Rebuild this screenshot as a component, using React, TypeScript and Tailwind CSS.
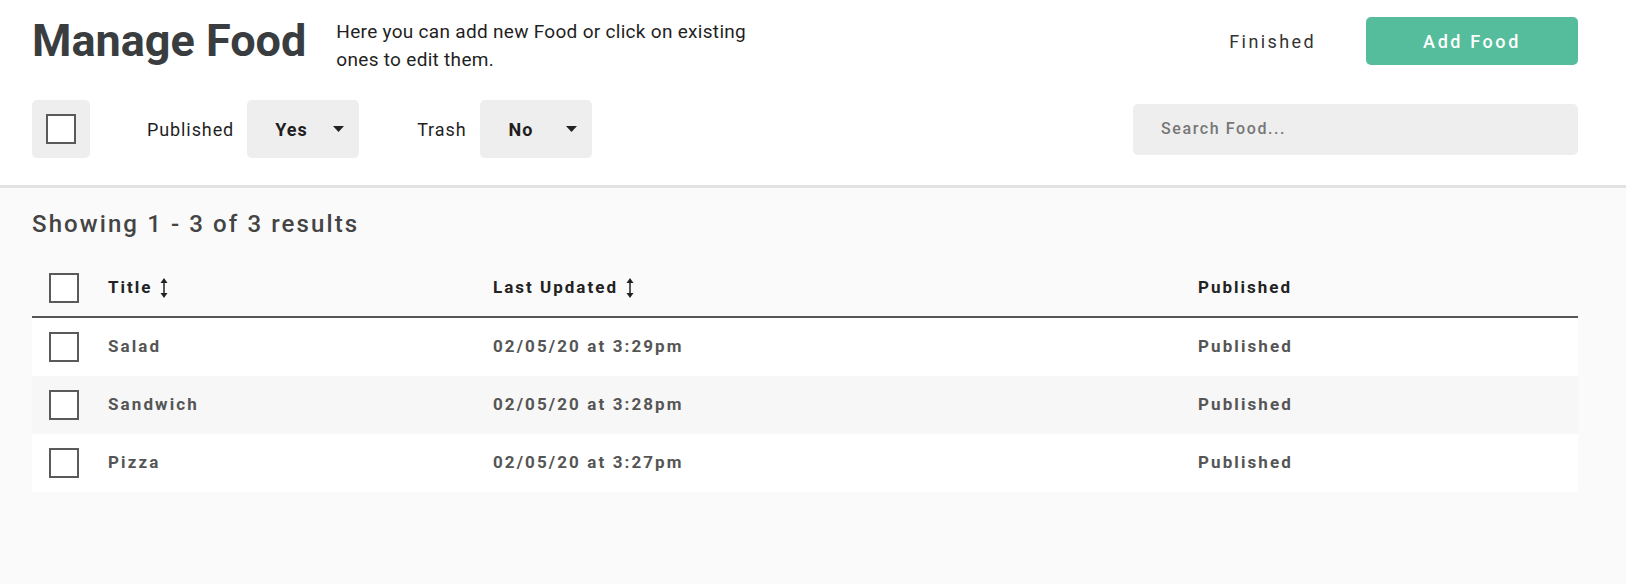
import React from 'react';

type FoodRow = {
  title: string;
  updated: string;
  status: string;
};

const rows: FoodRow[] = [
  { title: 'Salad', updated: '02/05/20 at 3:29pm', status: 'Published' },
  { title: 'Sandwich', updated: '02/05/20 at 3:28pm', status: 'Published' },
  { title: 'Pizza', updated: '02/05/20 at 3:27pm', status: 'Published' },
];

const Caret = () => (
  <svg width="11" height="6" viewBox="0 0 11 6" className="fill-[#222]">
    <path d="M0 0 H11 L5.5 6 Z" />
  </svg>
);

const SortIcon = () => (
  <svg width="10" height="22" viewBox="0 0 10 22" className="ml-[7px] text-[#222]">
    <path d="M5 1 L1.5 6 H8.5 Z" fill="currentColor" />
    <path d="M5 21 L1.5 16 H8.5 Z" fill="currentColor" />
    <line x1="5" y1="5" x2="5" y2="17" stroke="currentColor" strokeWidth="1.5" />
  </svg>
);

const Checkbox = () => <div className="h-[30px] w-[30px] border-2 border-[#5a5a5a] bg-white" />;

const Select = ({ value }: { value: string }) => (
  <div className="flex h-[58px] w-[112px] items-center justify-between rounded-[5px] bg-[#eeeeee] pl-7 pr-[15px]">
    <span className="text-[18px] font-bold tracking-[1px] text-[#1e1e1e]">{value}</span>
    <Caret />
  </div>
);

export default function App() {
  return (
    <div className="min-h-screen bg-[#fafafa] font-['Roboto',sans-serif]">
      <div className="border-b-[3px] border-[#e2e2e2] bg-white pb-[27px] pl-8 pr-[48px] pt-[15px]">
        <div className="flex items-start justify-between">
          <div className="flex items-start">
            <h1 className="text-[45px] font-bold leading-[52px] tracking-[0px] text-[#3a3d3f]">Manage Food</h1>
            <p className="ml-[30px] mt-[3px] text-[19px] leading-[28px] tracking-[0.3px] text-[#1f1f1f]">
              Here you can add new Food or click on existing
              <br />
              ones to edit them.
            </p>
          </div>
          <div className="mt-[2px] flex items-center">
            <button className="text-[18px] tracking-[2.4px] text-[#333]">Finished</button>
            <button className="ml-[50px] h-[48px] w-[212px] rounded-[5px] bg-[#55bd9b] text-[18px] font-medium tracking-[2.6px] text-white">
              Add Food
            </button>
          </div>
        </div>

        <div className="mt-[26px] flex items-center justify-between">
          <div className="flex items-center">
            <div className="flex h-[58px] w-[58px] items-center justify-center rounded-[5px] bg-[#eeeeee]">
              <Checkbox />
            </div>
            <span className="ml-[57px] mr-[13px] text-[18px] tracking-[0.9px] text-[#1f1f1f]">Published</span>
            <Select value="Yes" />
            <span className="ml-[58px] mr-[14px] text-[18px] tracking-[0.9px] text-[#1f1f1f]">Trash</span>
            <Select value="No" />
          </div>
          <div className="flex h-[51px] w-[445px] items-center rounded-[5px] bg-[#eeeeee] px-7 text-[16px] font-medium tracking-[1.6px] text-[#777]">
            Search Food...
          </div>
        </div>
      </div>

      <div className="pb-[90px] pl-8 pr-[48px] pt-[22px]">
        <h2 className="text-[24px] font-medium leading-[28px] tracking-[2.1px] text-[#444]">Showing 1 - 3 of 3 results</h2>

        <div className="mt-[22px]">
          <div className="grid h-[58px] grid-cols-[76px_385px_705px_1fr] items-center border-b-2 border-[#555] text-[17px] font-bold tracking-[2px] text-[#222]">
            <div className="pl-[17px]">
              <Checkbox />
            </div>
            <div className="flex items-center">
              Title
              <SortIcon />
            </div>
            <div className="flex items-center">
              Last Updated
              <SortIcon />
            </div>
            <div>Published</div>
          </div>

          {rows.map((row, i) => (
            <div
              key={row.title}
              className={`grid h-[58px] grid-cols-[76px_385px_705px_1fr] items-center text-[17px] font-bold tracking-[2.1px] text-[#555] ${
                i % 2 === 1 ? 'bg-[#f7f7f7]' : 'bg-white'
              }`}
            >
              <div className="pl-[17px]">
                <Checkbox />
              </div>
              <div>{row.title}</div>
              <div>{row.updated}</div>
              <div>{row.status}</div>
            </div>
          ))}
        </div>
      </div>
    </div>
  );
}
